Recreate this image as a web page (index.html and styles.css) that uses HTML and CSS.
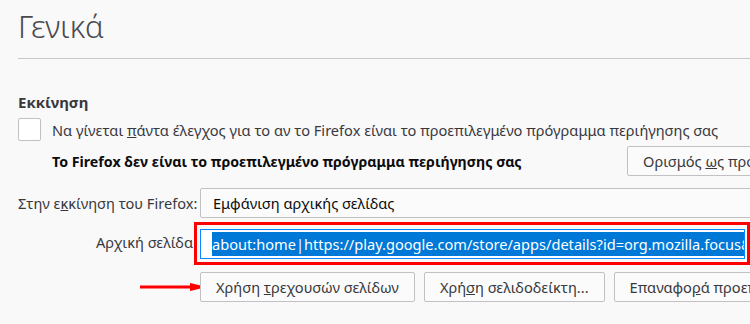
FILE: index.html
```html
<!DOCTYPE html>
<html lang="el">
<head>
  <meta charset="UTF-8" />
  <meta name="viewport" content="width=device-width, initial-scale=1.0" />
  <title>Γενικά</title>
  <link rel="stylesheet" href="styles.css">
</head>
<body>
  <div class="page">
    <h1 class="title">Γενικά</h1>

    <section class="startup">
      <h2 class="section-title">Εκκίνηση</h2>

      <label class="check-row">
        <span class="checkbox"></span>
        <span>Να γίνεται <u>π</u>άντα έλεγχος για το αν το Firefox είναι το προεπιλεγμένο πρόγραμμα περιήγησης σας</span>
      </label>

      <div class="default-row">
        <span class="default-note">Το Firefox δεν είναι το προεπιλεγμένο πρόγραμμα περιήγησης σας</span>
        <button class="btn">Ορισμός <u>ω</u>ς προεπιλογή...</button>
      </div>

      <div class="form-grid">
        <span class="form-label first">Στην ε<u>κ</u>κίνηση του Firefox:</span>
        <div class="select">Εμφάνιση αρχικής σελίδας</div>

        <span class="form-label">Αρχική σελίδα</span>
        <div class="highlight">
          <div class="url-input"><span class="selected">about:home|https://play.google.com/store/apps/details?id=org.mozilla.focus&amp;referrer=utm_source%3Dmozilla</span></div>
        </div>

        <span class="arrow-cell">
          <svg class="arrow" width="67" height="12" viewBox="0 0 67 12">
            <line x1="0" y1="6" x2="54" y2="6" stroke="#f00" stroke-width="3" />
            <polygon points="50,2 67,6 50,10" fill="#f00" />
          </svg>
        </span>
        <div class="btn-row">
          <button class="btn">Χρήση <u>τ</u>ρεχουσών σελίδων</button>
          <button class="btn">Χρή<u>σ</u>η σελιδοδείκτη...</button>
          <button class="btn">Επαναφο<u>ρ</u>ά προεπιλογής</button>
        </div>
      </div>
    </section>
  </div>
</body>
</html>
```

FILE: styles.css
```css
html, body {
  margin: 0;
  overflow: hidden;
}

body {
  background: #f9f9fa;
  color: #0c0c0d;
  font-family: "Noto Sans", "Open Sans", sans-serif;
  font-size: 14.6px;
}

.page {
  padding-left: 18px;
  width: 1000px;
}

.title {
  margin: 0;
  padding-top: 6px;
  height: 52px;
  font-size: 31px;
  font-weight: 300;
  line-height: 40px;
  color: #4a4a4f;
  border-bottom: 1px solid #c8c8ca;
}

.section-title {
  margin: 30px 0 0;
  font-size: 15px;
  font-weight: 700;
  line-height: 26px;
  color: #38383d;
}

.check-row {
  display: flex;
  align-items: center;
  gap: 11px;
  margin-top: 3px;
  color: #38383d;
}

.checkbox {
  width: 21px;
  height: 21px;
  border: 1px solid #c1c1c3;
  border-radius: 2px;
  background: #fff;
}

.default-row {
  display: flex;
  align-items: center;
  margin: 5px 0 0 34px;
}

.default-note {
  width: 575px;
  font-size: 14.2px;
  font-weight: 700;
  color: #0c0c0d;
}

.btn {
  height: 30px;
  padding: 0 15px;
  border: 1px solid #c1c1c3;
  border-radius: 2px;
  background: #fbfbfb;
  font: inherit;
  color: #38383d;
  white-space: nowrap;
}

.form-grid {
  display: grid;
  grid-template-columns: 182px 1fr;
  align-items: center;
  margin-top: 12px;
}

.form-label {
  text-align: right;
  white-space: nowrap;
  padding-right: 7px;
  color: #38383d;
}

.form-label.first {
  text-align: left;
  padding-right: 0;
}

.select {
  height: 28px;
  line-height: 28px;
  padding-left: 12px;
  border: 1px solid #c1c1c3;
  border-radius: 2px;
  background: #fbfbfb;
  color: #0c0c0d;
}

.highlight {
  justify-self: start;
  margin: 4px 0 0 -6px;
  padding: 4px 2px 3px 3px;
  border: 3px solid #f00;
}

.url-input {
  width: 532px;
  height: 28px;
  padding-left: 11px;
  display: flex;
  align-items: center;
  border: 1px solid #0a84ff;
  background: #fff;
  overflow: hidden;
  white-space: nowrap;
}

.selected {
  background: #0078d7;
  color: #fff;
  line-height: 24px;
}

.arrow-cell {
  display: flex;
  justify-content: flex-end;
  margin-top: 7px;
}

.arrow {
  display: block;
  margin-right: -7px;
}

.btn-row {
  display: flex;
  gap: 9px;
  margin-top: 7px;
}
```
